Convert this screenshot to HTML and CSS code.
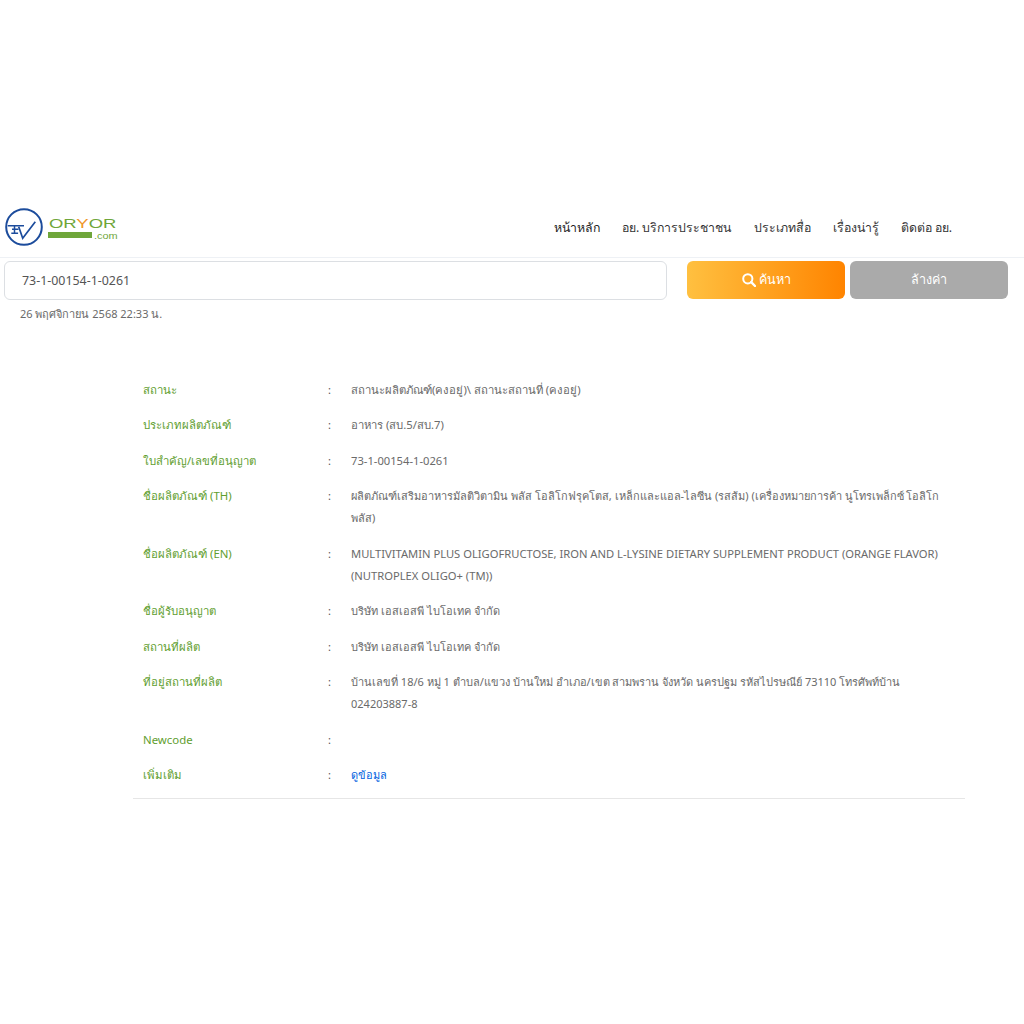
FILE: index.html
```html
<!DOCTYPE html>
<html lang="th">
<head>
<meta charset="utf-8">
<title>ORYOR</title>
<link rel="stylesheet" href="styles.css">
</head>
<body>
<div class="ad-space"></div>
<header class="site-header">
  <a class="logo" href="#">
    <svg class="logo-mark" width="38" height="38" viewBox="0 0 38 38" fill="none">
      <circle cx="19" cy="19" r="17.8" stroke="#1c4c9c" stroke-width="2"/>
      <path d="M2.7 17.7H19M7 21.3h6.5M9.5 17.7v7.6M6.3 25.3h6.8" stroke="#1c4c9c" stroke-width="1.5"/>
      <path d="M13.7 18.7l4 11.6 12.6-16.6" stroke="#1c4c9c" stroke-width="1.7"/>
    </svg>
    <span class="logo-text">
      <span class="logo-word">OR<span class="logo-y">Y</span>OR</span>
      <span class="logo-sub"><span class="logo-bar"></span><span class="logo-com">.com</span></span>
    </span>
  </a>
  <nav class="main-nav">
    <a class="nav-link nav-active" href="#">หน้าหลัก</a>
    <a class="nav-link" href="#">อย. บริการประชาชน</a>
    <a class="nav-link" href="#">ประเภทสื่อ</a>
    <a class="nav-link" href="#">เรื่องน่ารู้</a>
    <a class="nav-link" href="#">ติดต่อ อย.</a>
  </nav>
</header>
<section class="search-bar">
  <div class="search-field">73-1-00154-1-0261</div>
  <div class="search-actions">
    <button class="btn btn-search" type="button">
      <svg width="14" height="14" viewBox="0 0 14 14" fill="none"><circle cx="5.8" cy="5.8" r="4.6" stroke="#fff" stroke-width="2"/><path d="M9.2 9.2L13 13" stroke="#fff" stroke-width="2.4" stroke-linecap="round"/></svg>
      ค้นหา
    </button>
    <button class="btn btn-clear" type="button">ล้างค่า</button>
  </div>
</section>
<p class="stamp">26 พฤศจิกายน 2568 22:33 น.</p>
<main class="detail">
  <div class="row"><div class="label">สถานะ</div><div class="colon">:</div><div class="value value-wide">สถานะผลิตภัณฑ์(คงอยู่)\ สถานะสถานที่ (คงอยู่)</div></div>
  <div class="row"><div class="label">ประเภทผลิตภัณฑ์</div><div class="colon">:</div><div class="value value-wide">อาหาร (สบ.5/สบ.7)</div></div>
  <div class="row"><div class="label">ใบสำคัญ/เลขที่อนุญาต</div><div class="colon">:</div><div class="value value-latin">73-1-00154-1-0261</div></div>
  <div class="row"><div class="label">ชื่อผลิตภัณฑ์ (TH)</div><div class="colon">:</div><div class="value">ผลิตภัณฑ์เสริมอาหารมัลติวิตามิน พลัส โอลิโกฟรุคโตส, เหล็กและแอล-ไลซีน (รสส้ม) (เครื่องหมายการค้า นูโทรเพล็กซ์ โอลิโก พลัส)</div></div>
  <div class="row"><div class="label">ชื่อผลิตภัณฑ์ (EN)</div><div class="colon">:</div><div class="value value-latin">MULTIVITAMIN PLUS OLIGOFRUCTOSE, IRON AND L-LYSINE DIETARY SUPPLEMENT PRODUCT (ORANGE FLAVOR) (NUTROPLEX OLIGO+ (TM))</div></div>
  <div class="row"><div class="label">ชื่อผู้รับอนุญาต</div><div class="colon">:</div><div class="value">บริษัท เอสเอสพี ไบโอเทค จำกัด</div></div>
  <div class="row"><div class="label">สถานที่ผลิต</div><div class="colon">:</div><div class="value">บริษัท เอสเอสพี ไบโอเทค จำกัด</div></div>
  <div class="row"><div class="label">ที่อยู่สถานที่ผลิต</div><div class="colon">:</div><div class="value">บ้านเลขที่ 18/6 หมู่ 1 ตำบล/แขวง บ้านใหม่ อำเภอ/เขต สามพราน จังหวัด นครปฐม รหัสไปรษณีย์ 73110 โทรศัพท์บ้าน 024203887-8</div></div>
  <div class="row"><div class="label">Newcode</div><div class="colon">:</div><div class="value"></div></div>
  <div class="row"><div class="label">เพิ่มเติม</div><div class="colon">:</div><div class="value"><a class="more" href="#">ดูข้อมูล</a></div></div>
</main>
</body>
</html>
```
FILE: styles.css
```css
* { box-sizing: border-box; }
body {
  margin: 0;
  background: #fff;
  color: #666;
  font-family: "Noto Sans", "Open Sans", "DejaVu Sans", sans-serif;
  font-weight: 400;
  font-size: 11px;
}
a { text-decoration: none; color: inherit; }
.ad-space { height: 200px; }
.site-header {
  height: 58px;
  display: flex;
  align-items: center;
  border-bottom: 1px solid #eef1f5;
  padding: 0 72px 3px 5px;
}
.logo { display: flex; align-items: center; gap: 5px; }
.logo-mark { display: block; }
.logo-text { display: flex; flex-direction: column; width: 71px; padding-top: 2px; }
.logo-word {
  font-family: "Liberation Sans", sans-serif;
  font-size: 13px;
  line-height: 13px;
  color: #6fa63a;
  transform: scaleX(1.42);
  transform-origin: left;
  margin-left: 1px;
  white-space: nowrap;
}
.logo-y { color: #f0962a; }
.logo-sub { display: flex; align-items: center; gap: 2px; height: 8px; margin-top: 1px; }
.logo-bar { width: 44px; height: 6px; background: #6fa63a; flex: none; }
.logo-com { font-family: "Liberation Sans", sans-serif; font-size: 9.5px; line-height: 8px; color: #6fa63a; transform: scaleX(1.15); transform-origin: left; padding-top: 2px; }
.main-nav { margin-left: auto; display: flex; gap: 22px; padding-top: 1px; }
.nav-link { font-size: 12.3px; color: #333; line-height: 20px; }
.nav-active { color: #222; font-weight: 500; }
.search-bar { display: flex; padding: 3px 16px 0 4px; height: 42px; }
.search-field {
  width: 663px;
  height: 39px;
  border: 1px solid #dcdfe3;
  border-radius: 6px;
  padding: 0 17px;
  display: flex;
  align-items: center;
  font-size: 12.4px;
  color: #555;
}
.search-actions { display: flex; gap: 5px; margin-left: 20px; }
.btn {
  width: 158px;
  height: 38px;
  border: 0;
  border-radius: 6px;
  color: #fff;
  font: inherit;
  font-size: 12.6px;
  display: flex;
  align-items: center;
  justify-content: center;
  gap: 3px;
}
.btn-search { background: linear-gradient(90deg, #ffc040, #ff8400); }
.btn-clear { background: #aaa; }
.stamp { margin: 5px 0 0 20px; font-size: 11px; line-height: 18px; color: #6a6a6a; }
.detail {
  width: 832px;
  margin: 49px 0 0 133px;
  border-bottom: 1px solid #e6e6e6;
  padding-bottom: 5px;
}
.row { display: flex; padding: 6.75px 10px; line-height: 22px; }
.label { width: 185px; color: #5f9e2f; font-size: 11.4px; }
.colon { width: 23px; color: #555; }
.value { width: 604px; color: #6a6a6a; }
.value-wide { font-size: 11.3px; }
.value-latin { font-size: 11.2px; }
.more { color: #0062e0; }
```
